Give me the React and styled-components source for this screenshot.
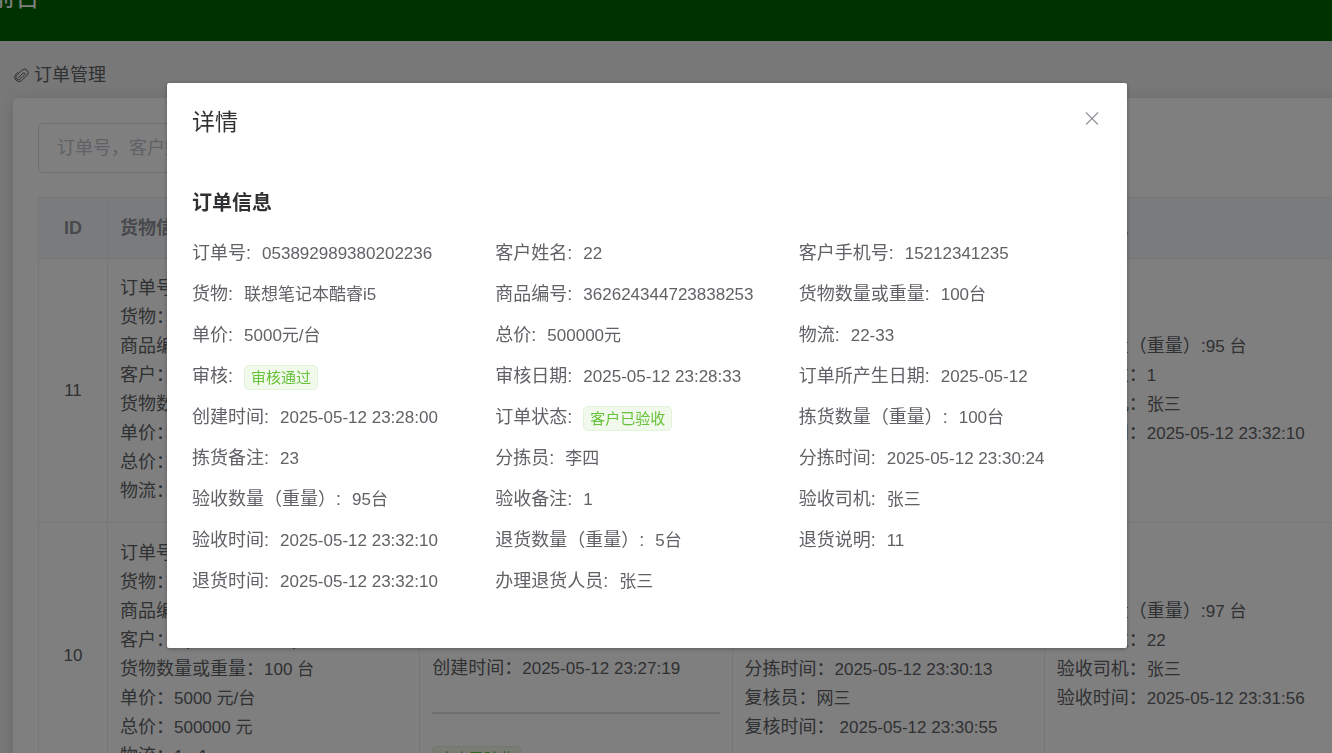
import React, { useState } from "react"
import styled, { createGlobalStyle, ThemeProvider } from "styled-components"

const theme = {
  colors: {
    green: "#006400",
    page: "#f0f0f0",
    heading: "#303133",
    text: "#606266",
    muted: "#909399",
    placeholder: "#c0c4cc",
    inputBorder: "#dcdfe6",
    line: "#ebeef5",
    tableHead: "#f5f7fa",
    success: "#67c23a",
    successBg: "#f0f9eb",
    successLine: "#e1f3d8",
  },
}

const GlobalStyle = createGlobalStyle`
  *, *::before, *::after {
    box-sizing: border-box;
  }
  body {
    margin: 0;
    color: ${theme.colors.text};
    font-family: "Liberation Sans", "Noto Sans CJK SC", sans-serif;
    font-size: 18px;
    line-height: 29px;
  }
`

const Page = styled.div`
  height: 100vh;
  overflow: hidden;
  background: ${({ theme }) => theme.colors.page};
`

const TopBar = styled.header`
  height: 41px;
  overflow: hidden;
  background: ${({ theme }) => theme.colors.green};
`

const SiteTitle = styled.div`
  margin: -23px 0 0 -10px;
  color: white;
  font-size: 25px;
  line-height: 40px;
`

const Crumb = styled.nav`
  display: flex;
  align-items: center;
  gap: 4px;
  padding: 20px 13px 8px;
`

const Card = styled.main`
  margin: 0 -50px 0 13px;
  padding: 25px;
  background: white;
  border-radius: 5px;
  box-shadow: 0 2px 15px rgba(0, 0, 0, 0.12);
`

const SearchInput = styled.input`
  display: block;
  width: 250px;
  height: 50px;
  margin-bottom: 24px;
  padding: 0 18px;
  border: 1px solid ${({ theme }) => theme.colors.inputBorder};
  border-radius: 5px;
  color: inherit;
  font: inherit;
  &::placeholder {
    color: ${({ theme }) => theme.colors.placeholder};
  }
`

const Table = styled.table`
  width: 100%;
  table-layout: fixed;
  border-spacing: 0;
  border-top: 1px solid ${({ theme }) => theme.colors.line};
  border-left: 1px solid ${({ theme }) => theme.colors.line};
`

const IdColumn = styled.col`
  width: 69px;
`

const HeadCell = styled.th`
  height: 61px;
  padding: 0 12px;
  border-right: 1px solid ${({ theme }) => theme.colors.line};
  border-bottom: 1px solid ${({ theme }) => theme.colors.line};
  background: ${({ theme }) => theme.colors.tableHead};
  color: ${({ theme }) => theme.colors.muted};
  text-align: ${({ $center }) => ($center ? "center" : "left")};
`

const Cell = styled.td`
  padding: 15px 12px 16px;
  border-right: 1px solid ${({ theme }) => theme.colors.line};
  border-bottom: 1px solid ${({ theme }) => theme.colors.line};
  text-align: ${({ $center }) => ($center ? "center" : "left")};
  vertical-align: middle;
`

const Value = styled.span`
  font-size: 17px;
`

const Divider = styled.hr`
  height: 2px;
  margin: 29px 0;
  border: 0;
  background: ${({ theme }) => theme.colors.inputBorder};
`

const Tag = styled.span`
  display: inline-block;
  height: 25px;
  padding: 0 6px;
  border: 1px solid ${({ theme }) => theme.colors.successLine};
  border-radius: 5px;
  background: ${({ theme }) => theme.colors.successBg};
  color: ${({ theme }) => theme.colors.success};
  font-size: 15px;
  line-height: 23px;
  vertical-align: middle;
`

const Overlay = styled.div`
  position: fixed;
  inset: 0;
  display: flex;
  justify-content: center;
  align-items: flex-start;
  padding: 83px 38px 0 0;
  background: rgba(0, 0, 0, 0.5);
`

const Dialog = styled.section`
  position: relative;
  width: 960px;
  max-width: 100%;
  padding: 24px 25px 40px;
  background: white;
  border-radius: 2px;
  box-shadow: 0 1px 4px rgba(0, 0, 0, 0.3);
`

const DialogTitle = styled.h2`
  margin: 0 0 51px;
  color: ${({ theme }) => theme.colors.heading};
  font-size: 23px;
  font-weight: 400;
  line-height: 30px;
`

const CloseButton = styled.button`
  position: absolute;
  top: 25px;
  right: 25px;
  display: flex;
  padding: 0;
  border: 0;
  background: none;
  color: ${({ theme }) => theme.colors.muted};
  cursor: pointer;
`

const SectionTitle = styled.h3`
  margin: 0 0 21px;
  color: ${({ theme }) => theme.colors.heading};
  font-size: 20px;
  line-height: 30px;
`

const Details = styled.dl`
  display: grid;
  grid-template-columns: repeat(3, 1fr);
  margin: 0;
`

const Detail = styled.div`
  display: flex;
  align-items: baseline;
  gap: 11px;
  height: 29px;
  margin-bottom: 12px;
`

const Term = styled.dt`
  white-space: nowrap;
`

const Description = styled.dd`
  margin: 0;
  font-size: 17px;
  white-space: nowrap;
`

const details = [
  ["订单号", "053892989380202236"],
  ["客户姓名", "22"],
  ["客户手机号", "15212341235"],
  ["货物", "联想笔记本酷睿i5"],
  ["商品编号", "362624344723838253"],
  ["货物数量或重量", "100台"],
  ["单价", "5000元/台"],
  ["总价", "500000元"],
  ["物流", "22-33"],
  ["审核", "审核通过", true],
  ["审核日期", "2025-05-12 23:28:33"],
  ["订单所产生日期", "2025-05-12"],
  ["创建时间", "2025-05-12 23:28:00"],
  ["订单状态", "客户已验收", true],
  ["拣货数量（重量）", "100台"],
  ["拣货备注", "23"],
  ["分拣员", "李四"],
  ["分拣时间", "2025-05-12 23:30:24"],
  ["验收数量（重量）", "95台"],
  ["验收备注", "1"],
  ["验收司机", "张三"],
  ["验收时间", "2025-05-12 23:32:10"],
  ["退货数量（重量）", "5台"],
  ["退货说明", "11"],
  ["退货时间", "2025-05-12 23:32:10"],
  ["办理退货人员", "张三"],
]

const orders = [
  {
    id: 11,
    goods: [
      ["订单号：", "053892989380202236"],
      ["货物：", "联想笔记本酷睿i5"],
      ["商品编号：", "362624344723838253"],
      ["客户：", "22(15212341235)"],
      ["货物数量或重量：", "100 台"],
      ["单价：", "5000 元/台"],
      ["总价：", "500000 元"],
      ["物流：", "22-33"],
    ],
    audit: [
      ["审核：", "审核通过"],
      ["审核日期：", "2025-05-12 23:28:33"],
      ["订单日期：", "2025-05-12"],
      ["创建时间：", "2025-05-12 23:28:00"],
    ],
    picking: [
      ["拣货数量（重量）:", "100 台"],
      ["拣货备注：", "23"],
      ["分拣员：", "李四"],
      ["分拣时间：", "2025-05-12 23:30:24"],
    ],
    receipt: [
      ["验收数量（重量）:", "95 台"],
      ["验收备注：", "1"],
      ["验收司机：", "张三"],
      ["验收时间：", "2025-05-12 23:32:10"],
    ],
  },
  {
    id: 10,
    goods: [
      ["订单号：", "053892989380202235"],
      ["货物：", "联想笔记本酷睿i5"],
      ["商品编号：", "362624344723838253"],
      ["客户：", "1(15212341235)"],
      ["货物数量或重量：", "100 台"],
      ["单价：", "5000 元/台"],
      ["总价：", "500000 元"],
      ["物流：", "1 - 1"],
    ],
    audit: [
      ["审核：", "审核通过"],
      ["审核日期：", "2025-05-12 23:27:40"],
      ["订单日期：", "2025-05-12"],
      ["订单状态：", "客户已验收"],
      ["创建时间：", "2025-05-12 23:27:19"],
    ],
    status: "客户已验收",
    picking: [
      ["拣货数量（重量）:", "100 台"],
      ["拣货备注：", "22"],
      ["分拣员：", "李四"],
      ["分拣时间：", "2025-05-12 23:30:13"],
      ["复核员：", "网三"],
      ["复核时间： ", "2025-05-12 23:30:55"],
    ],
    receipt: [
      ["验收数量（重量）:", "97 台"],
      ["验收备注：", "22"],
      ["验收司机：", "张三"],
      ["验收时间：", "2025-05-12 23:31:56"],
    ],
  },
]

const Paperclip = () => (
  <svg width="17" height="17" viewBox="0 0 17 17" fill="none" stroke="currentColor" strokeWidth="1" strokeLinecap="round" aria-hidden="true">
    <path d="M4.900 11.300l5.200-5.200a1.100 1.100 0 0 1 1.600 1.600L7.300 12.100a2.500 2.500 0 0 1-3.600-3.600l5.400-5.300a3.500 3.500 0 0 1 5 5l-5.600 5.600a4.300 4.300 0 0 1-6-6L5.200 5" />
  </svg>
)

const Cross = () => (
  <svg width="20" height="20" viewBox="0 0 20 20" fill="none" stroke="currentColor" strokeWidth="1.2" aria-hidden="true">
    <path d="M4 4.500l12 12M16 4.500l-12 12" />
  </svg>
)

const Lines = ({ items }) =>
  items.map(([label, value]) => (
    <div key={label}>
      {label}
      <Value>{value}</Value>
    </div>
  ))

const OrderTable = () => (
  <Table>
    <colgroup>
      <IdColumn />
      <col />
      <col />
      <col />
      <col />
    </colgroup>
    <thead>
      <tr>
        <HeadCell $center>ID</HeadCell>
        <HeadCell>货物信息</HeadCell>
        <HeadCell>审核信息</HeadCell>
        <HeadCell>拣货信息</HeadCell>
        <HeadCell>验收信息</HeadCell>
      </tr>
    </thead>
    <tbody>
      {orders.map((order) => (
        <tr key={order.id}>
          <Cell $center>
            <Value>{order.id}</Value>
          </Cell>
          <Cell>
            <Lines items={order.goods} />
          </Cell>
          <Cell>
            <Lines items={order.audit} />
            {order.status && (
              <>
                <Divider />
                <Tag>{order.status}</Tag>
              </>
            )}
          </Cell>
          <Cell>
            <Lines items={order.picking} />
          </Cell>
          <Cell>
            <Lines items={order.receipt} />
          </Cell>
        </tr>
      ))}
    </tbody>
  </Table>
)

const DetailDialog = ({ onClose }) => (
  <Overlay>
    <Dialog role="dialog" aria-modal="true" aria-labelledby="dialog-title">
      <DialogTitle id="dialog-title">详情</DialogTitle>
      <CloseButton type="button" aria-label="关闭" onClick={onClose}>
        <Cross />
      </CloseButton>
      <SectionTitle>订单信息</SectionTitle>
      <Details>
        {details.map(([label, value, tagged]) => (
          <Detail key={label}>
            <Term>{label}:</Term>
            <Description>{tagged ? <Tag>{value}</Tag> : value}</Description>
          </Detail>
        ))}
      </Details>
    </Dialog>
  </Overlay>
)

const App = () => {
  const [open, setOpen] = useState(true)

  return (
    <ThemeProvider theme={theme}>
      <GlobalStyle />
      <Page>
        <TopBar>
          <SiteTitle>前台</SiteTitle>
        </TopBar>
        <Crumb>
          <Paperclip />
          订单管理
        </Crumb>
        <Card>
          <SearchInput aria-label="搜索订单" placeholder="订单号，客户姓名" />
          <OrderTable />
        </Card>
      </Page>
      {open && <DetailDialog onClose={() => setOpen(false)} />}
    </ThemeProvider>
  )
}

export default App
